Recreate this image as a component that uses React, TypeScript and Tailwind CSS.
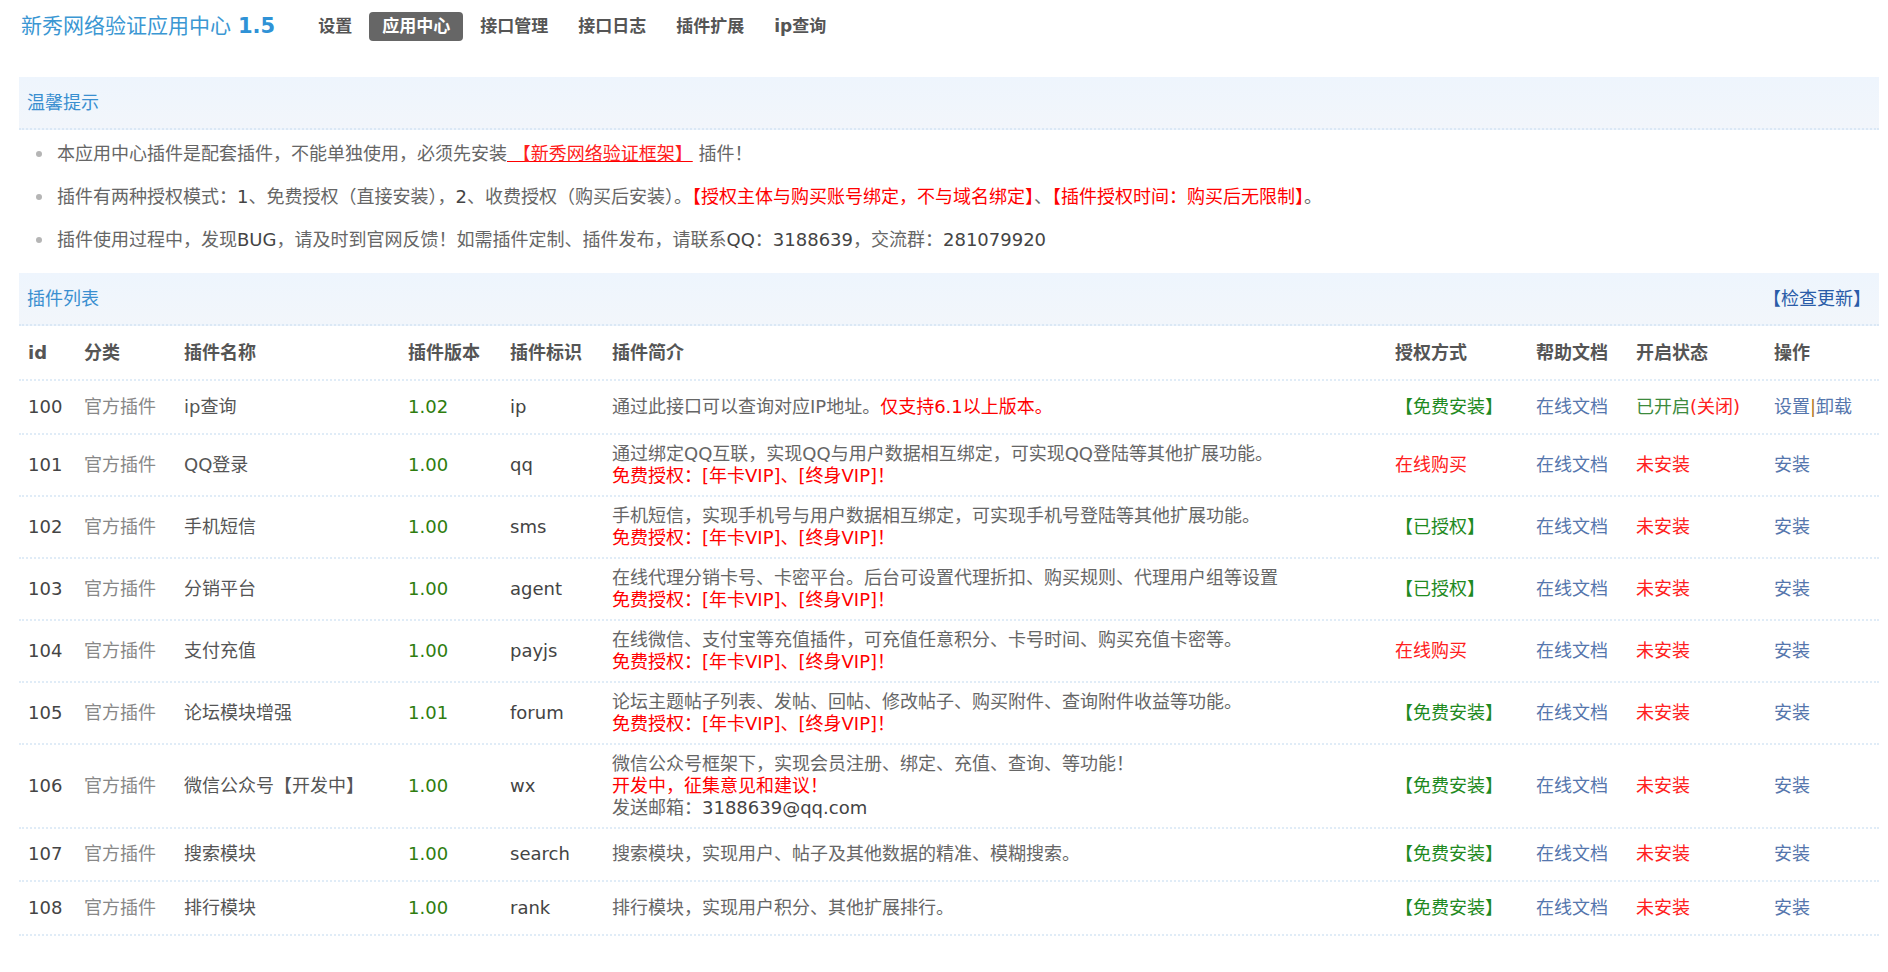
import React from "react";

type Row = {
  id: string;
  name: string;
  ver: string;
  tag: string;
  desc: React.ReactNode;
  auth: "free" | "buy" | "ok";
  on?: boolean;
};

const Red = ({ children }: { children: React.ReactNode }) => (
  <span className="text-[#ff0000]">{children}</span>
);

const vip = <Red>免费授权：[年卡VIP]、[终身VIP]！</Red>;

const rows: Row[] = [
  {
    id: "100",
    name: "ip查询",
    ver: "1.02",
    tag: "ip",
    desc: (
      <div>
        通过此接口可以查询对应IP地址。<Red>仅支持6.1以上版本。</Red>
      </div>
    ),
    auth: "free",
    on: true,
  },
  {
    id: "101",
    name: "QQ登录",
    ver: "1.00",
    tag: "qq",
    desc: (
      <>
        <div>通过绑定QQ互联，实现QQ与用户数据相互绑定，可实现QQ登陆等其他扩展功能。</div>
        <div>{vip}</div>
      </>
    ),
    auth: "buy",
  },
  {
    id: "102",
    name: "手机短信",
    ver: "1.00",
    tag: "sms",
    desc: (
      <>
        <div>手机短信，实现手机号与用户数据相互绑定，可实现手机号登陆等其他扩展功能。</div>
        <div>{vip}</div>
      </>
    ),
    auth: "ok",
  },
  {
    id: "103",
    name: "分销平台",
    ver: "1.00",
    tag: "agent",
    desc: (
      <>
        <div>在线代理分销卡号、卡密平台。后台可设置代理折扣、购买规则、代理用户组等设置</div>
        <div>{vip}</div>
      </>
    ),
    auth: "ok",
  },
  {
    id: "104",
    name: "支付充值",
    ver: "1.00",
    tag: "payjs",
    desc: (
      <>
        <div>在线微信、支付宝等充值插件，可充值任意积分、卡号时间、购买充值卡密等。</div>
        <div>{vip}</div>
      </>
    ),
    auth: "buy",
  },
  {
    id: "105",
    name: "论坛模块增强",
    ver: "1.01",
    tag: "forum",
    desc: (
      <>
        <div>论坛主题帖子列表、发帖、回帖、修改帖子、购买附件、查询附件收益等功能。</div>
        <div>{vip}</div>
      </>
    ),
    auth: "free",
  },
  {
    id: "106",
    name: "微信公众号【开发中】",
    ver: "1.00",
    tag: "wx",
    desc: (
      <>
        <div>微信公众号框架下，实现会员注册、绑定、充值、查询、等功能！</div>
        <div>
          <Red>开发中，征集意见和建议！</Red>
        </div>
        <div>
          发送邮箱：<span className="text-[#444]">3188639@qq.com</span>
        </div>
      </>
    ),
    auth: "free",
  },
  {
    id: "107",
    name: "搜索模块",
    ver: "1.00",
    tag: "search",
    desc: <div>搜索模块，实现用户、帖子及其他数据的精准、模糊搜索。</div>,
    auth: "free",
  },
  {
    id: "108",
    name: "排行模块",
    ver: "1.00",
    tag: "rank",
    desc: <div>排行模块，实现用户积分、其他扩展排行。</div>,
    auth: "free",
  },
];

const grid =
  "grid grid-cols-[56px_100px_224px_102px_102px_783px_141px_100px_138px_1fr] items-center border-b-2 border-dotted border-[#e0ecf7]";

function Auth({ a }: { a: Row["auth"] }) {
  if (a === "buy") return <span className="text-[#ff2020]">在线购买</span>;
  return <span className="text-[#1f8a1f]">{a === "free" ? "【免费安装】" : "【已授权】"}</span>;
}

export default function App() {
  const nav = ["设置", "应用中心", "接口管理", "接口日志", "插件扩展", "ip查询"];
  return (
    <div className="min-h-[972px] bg-white pl-[19px] pr-[9px] font-['DejaVu_Sans','Noto_Sans_CJK_SC',sans-serif] text-[18px] text-[#666]">
      {/* header */}
      <div className="flex h-[77px] items-start pt-[12px]">
        <div className="flex h-[29px] items-center pl-[2px] text-[21px] text-[#3b97d3]">
          新秀网络验证应用中心<span className="ml-[7px] font-bold text-[#2f92d6]">1.5</span>
        </div>
        <div className="ml-[30px] flex h-[29px] items-center gap-[4px] text-[17px] font-bold text-[#555]">
          {nav.map((n) => (
            <span
              key={n}
              className={
                n === "应用中心"
                  ? "flex h-[29px] items-center rounded-[4px] bg-[#666] px-[13px] text-white"
                  : "flex h-[29px] items-center px-[13px]"
              }
            >
              {n}
            </span>
          ))}
        </div>
      </div>

      {/* tips */}
      <div className="flex h-[53px] items-center border-b-2 border-dotted border-[#dbe8f5] bg-gradient-to-b from-[#eef5fd] to-[#f2f6fb] pl-[8px] text-[#3a8fd0]">
        温馨提示
      </div>
      <ul className="pt-[2px] pb-[12px]">
        <li className="flex h-[43px] items-center">
          <span className="ml-[17px] mr-[15px] h-[6px] w-[6px] rounded-full bg-[#b5b5b5]" />
          <span>
            本应用中心插件是配套插件，不能单独使用，必须先安装
            <a className="text-[#ff2020] underline decoration-[#ff0000]"> 【新秀网络验证框架】</a> 插件！
          </span>
        </li>
        <li className="flex h-[43px] items-center">
          <span className="ml-[17px] mr-[15px] h-[6px] w-[6px] rounded-full bg-[#b5b5b5]" />
          <span>
            插件有两种授权模式：<span className="text-[#444]">1</span>、免费授权（直接安装），
            <span className="text-[#444]">2</span>、收费授权（购买后安装）。
            <Red>【授权主体与购买账号绑定，不与域名绑定】</Red>、<Red>【插件授权时间：购买后无限制】</Red>。
          </span>
        </li>
        <li className="flex h-[43px] items-center">
          <span className="ml-[17px] mr-[15px] h-[6px] w-[6px] rounded-full bg-[#b5b5b5]" />
          <span>
            插件使用过程中，发现<span className="text-[#444]">BUG</span>，请及时到官网反馈！如需插件定制、插件发布，请联系
            <span className="text-[#444]">QQ</span>：<span className="text-[#444]">3188639</span>，交流群：
            <span className="text-[#444]">281079920</span>
          </span>
        </li>
      </ul>

      {/* plugin list bar */}
      <div className="flex h-[53px] items-center justify-between border-b-2 border-dotted border-[#dbe8f5] bg-gradient-to-b from-[#eef5fd] to-[#f2f6fb] pl-[8px] pr-[8px]">
        <span className="text-[#3a8fd0]">插件列表</span>
        <span className="text-[#2a5ca8]">【检查更新】</span>
      </div>

      {/* table header */}
      <div className={`${grid} min-h-[55px] font-bold text-[#555]`}>
        {["id", "分类", "插件名称", "插件版本", "插件标识", "插件简介", "授权方式", "帮助文档", "开启状态", "操作"].map(
          (h) => (
            <div key={h} className="pl-[9px]">
              {h}
            </div>
          )
        )}
      </div>

      {rows.map((r) => (
        <div key={r.id} className={`${grid} min-h-[53.5px] py-[8px] leading-[22px]`}>
          <div className="pl-[9px] text-[#444]">{r.id}</div>
          <div className="pl-[9px] text-[#888]">官方插件</div>
          <div className="pl-[9px] whitespace-nowrap text-[#555]">{r.name}</div>
          <div className="pl-[9px] text-[#2e7d0e]">{r.ver}</div>
          <div className="pl-[9px] text-[#444]">{r.tag}</div>
          <div className="pl-[9px] whitespace-nowrap text-[#666]">{r.desc}</div>
          <div className="pl-[9px]">
            <Auth a={r.auth} />
          </div>
          <div className="pl-[9px] text-[#5576ad]">在线文档</div>
          <div className="pl-[9px]">
            {r.on ? (
              <span>
                <span className="text-[#3d8a3d]">已开启</span>
                <span className="text-[#ff2020]">(关闭)</span>
              </span>
            ) : (
              <span className="text-[#ff2020]">未安装</span>
            )}
          </div>
          <div className="pl-[9px] text-[#5576ad]">
            {r.on ? (
              <span>
                设置<span className="text-[#b07a20]">|</span>卸载
              </span>
            ) : (
              "安装"
            )}
          </div>
        </div>
      ))}
    </div>
  );
}
